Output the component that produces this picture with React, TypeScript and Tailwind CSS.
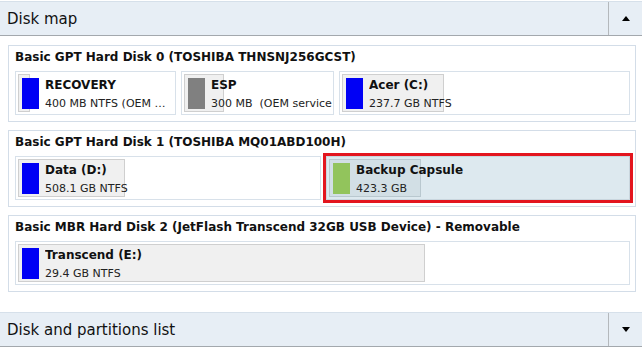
import React from 'react';

const FONT = { fontFamily: '"DejaVu Sans", "Noto Sans", sans-serif' };

interface Part {
  name: string;
  info: string;
  color: string;
  fill: number;
  width?: string;
  selected?: boolean;
}

interface Disk {
  title: string;
  parts: Part[];
}

const disks: Disk[] = [
  {
    title: 'Basic GPT Hard Disk 0 (TOSHIBA THNSNJ256GCST)',
    parts: [
      { name: 'RECOVERY', info: '400 MB NTFS (OEM …', color: 'bg-[#0000f5]', fill: 12, width: 'w-[161px]' },
      { name: 'ESP', info: '300 MB  (OEM service partition)', color: 'bg-[#808080]', fill: 40, width: 'w-[153px]' },
      { name: 'Acer (C:)', info: '237.7 GB NTFS', color: 'bg-[#0000f5]', fill: 102 },
    ],
  },
  {
    title: 'Basic GPT Hard Disk 1 (TOSHIBA MQ01ABD100H)',
    parts: [
      { name: 'Data (D:)', info: '508.1 GB NTFS', color: 'bg-[#0000f5]', fill: 107, width: 'w-[306px]' },
      { name: 'Backup Capsule', info: '423.3 GB', color: 'bg-[#92c45c]', fill: 92, selected: true },
    ],
  },
  {
    title: 'Basic MBR Hard Disk 2 (JetFlash Transcend 32GB USB Device) - Removable',
    parts: [{ name: 'Transcend (E:)', info: '29.4 GB NTFS', color: 'bg-[#0000f5]', fill: 407 }],
  },
];

const SectionHeader = ({ label, up }: { label: string; up: boolean }) => (
  <div className="mt-px border-t border-[#d6e0ea] border-b border-b-[#a3a8ad] bg-[#e7eef5] h-[35px] flex items-stretch">
    <div className="flex-1 flex items-center pl-[7px] pt-px text-[15px] text-[#111]">{label}</div>
    <div className="w-[34px] border-l border-[#b4b8bc] flex items-center justify-center">
      {up ? (
        <div className="w-0 h-0 border-l-[4px] border-r-[4px] border-b-[5px] border-l-transparent border-r-transparent border-b-black" />
      ) : (
        <div className="w-0 h-0 border-l-[4px] border-r-[4px] border-t-[5px] border-l-transparent border-r-transparent border-t-black" />
      )}
    </div>
  </div>
);

const Partition = ({ p }: { p: Part }) => (
  <div
    className={`relative h-[44px] border ${p.width ?? 'flex-1'} ${
      p.selected
        ? 'bg-[#dde9ef] border-[#c9d6de] outline-[3px] outline-solid outline-[#e3151e] outline-offset-[0px]'
        : 'bg-white border-[#d8e1ea]'
    } overflow-hidden`}
  >
    <div
      className={`absolute left-[2px] top-[2px] bottom-[2px] border ${
        p.selected ? 'bg-[#d2dfe5] border-[#b9c8cf]' : 'bg-[#f0f0f0] border-[#cfcfcf]'
      }`}
      style={{ width: p.fill }}
    />
    <div className={`absolute left-[6px] top-[6px] w-[17px] h-[31px] ${p.color}`} />
    <div className="absolute left-[29px] right-px top-[4px] overflow-hidden whitespace-pre">
      <div className="text-[12px] font-bold text-[#111] leading-[18px]">{p.name}</div>
      <div className="text-[11px] text-[#222] leading-[18px] mt-px">{p.info}</div>
    </div>
  </div>
);

const DiskBox = ({ d }: { d: Disk }) => (
  <div className="border border-[#d3dde8] pl-[6px] pr-[5px] pb-[6px]">
    <div className="h-[25px] pt-[2px] text-[12px] leading-[18px] font-bold text-[#111] whitespace-nowrap">{d.title}</div>
    <div className="flex gap-[5px]">
      {d.parts.map((p) => (
        <Partition key={p.name} p={p} />
      ))}
    </div>
  </div>
);

export default function App() {
  return (
    <div className="w-[642px] h-[353px] bg-white overflow-hidden" style={FONT}>
      <SectionHeader label="Disk map" up />
      <div className="pl-[8px] pr-[6px] pt-[9px] flex flex-col gap-[8px]">
        {disks.map((d) => (
          <DiskBox key={d.title} d={d} />
        ))}
      </div>
      <div className="mt-[20px]">
        <SectionHeader label="Disk and partitions list" up={false} />
      </div>
    </div>
  );
}
